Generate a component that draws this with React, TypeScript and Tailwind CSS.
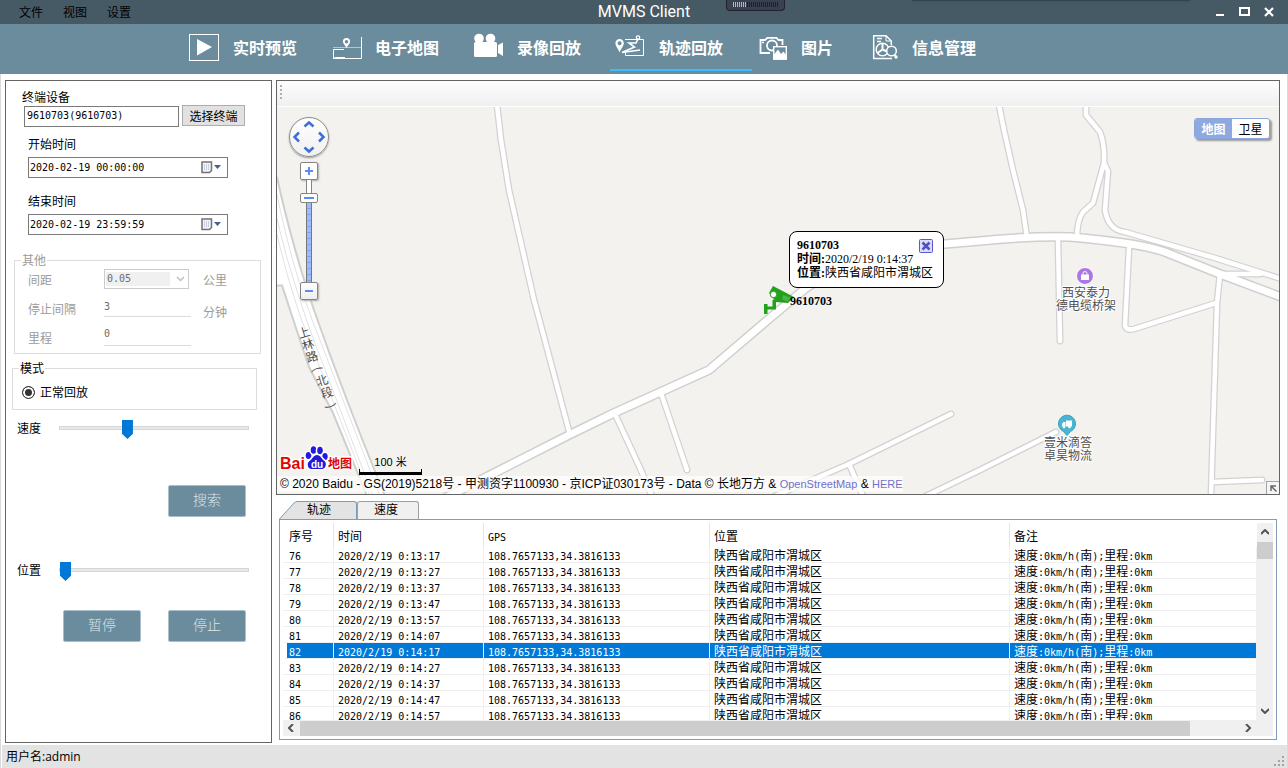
import type { ReactNode } from "react"

const navItems = [
    { label: "实时预览", icon: <PreviewIcon />, width: "w-[142px]" },
    { label: "电子地图", icon: <EMapIcon />, width: "w-[142px]" },
    { label: "录像回放", icon: <VideoIcon />, width: "w-[142px]" },
    { label: "轨迹回放", icon: <TrackIcon />, width: "w-[142px]", active: true },
    { label: "图片", icon: <PictureIcon />, width: "w-[111px]" },
    { label: "信息管理", icon: <InfoIcon />, width: "w-[142px]" },
]

const rows = [
    { id: 76, time: "0:13:17" },
    { id: 77, time: "0:13:27" },
    { id: 78, time: "0:13:37" },
    { id: 79, time: "0:13:47" },
    { id: 80, time: "0:13:57" },
    { id: 81, time: "0:14:07" },
    { id: 82, time: "0:14:17", selected: true },
    { id: 83, time: "0:14:27" },
    { id: 84, time: "0:14:37" },
    { id: 85, time: "0:14:47" },
    { id: 86, time: "0:14:57" },
]

// Minor roads, drawn as a grey casing with a white core
const smallRoads = [
    "M497 105 L501 140 L509 190 L534 300 L540 322 L569 431",
    "M999 105 L1004 130 L1013 170 L1023 210 L1027 238",
    "M1086 105 V115 L1100 132 Q1105 145 1104 163 L1093 203 L1083 212 Q1077 220 1077 238",
    "M1104 163 L1108 171 L1105 210 Q1108 230 1125 232 L1215 258 L1256 271 L1282 279",
    "M1058 240 L1060 341",
    "M1129 248 L1125 326 Q1127 331 1134 329 L1216 303",
    "M1220 274 L1217 303 L1211 496",
    "M1212 482 L1262 480",
    "M1222 274 L1260 274",
    "M1056 432 L980 470 L926 496",
    "M951 414 L849 464 L775 496",
    "M849 464 L863 496",
    "M615 414 L640 468 L652 496",
    "M661 393 L687 470",
]

const mainRoad = "M445 498 L569 435 L614 413 L709 370 L770 318 L806 288 Q860 252 945 244 L980 241 Q1030 236 1070 237 Q1140 243 1165 252 L1220 274 L1284 298"

const roadName = [
    { ch: "上", x: 304, y: 333, turn: -17 },
    { ch: "林", x: 308, y: 345, turn: -17 },
    { ch: "路", x: 312, y: 357, turn: -17 },
    { ch: "(", x: 317, y: 369, turn: 70 },
    { ch: "北", x: 322, y: 381, turn: -17 },
    { ch: "段", x: 327, y: 393, turn: -17 },
    { ch: ")", x: 331, y: 406, turn: 70 },
]

function PreviewIcon() {
    return (
        <svg width="30" height="30" viewBox="189 32 30 30" fill="none">
            <rect x="189.5" y="34.5" width="29" height="26" stroke="#fff" />
            <path d="M197 39 L212 47 L197 55.500 Z" fill="#fff" />
        </svg>
    )
}

function EMapIcon() {
    return (
        <svg width="30" height="30" viewBox="331 32 30 30" fill="none" stroke="#fff" overflow="visible">
            <path d="M361.5 37 V58.5 H333 M345 57.5 H334.500 M333.5 58 V49.500 H344" />
            <path d="M333 47.500 H361" opacity=".5" />
            <path fill="#fff" stroke="none" fillRule="evenodd" d="M346.500 38 a3.600 3.600 0 0 1 3.600 3.600 c0 2-2.200 3.800-3.600 6.400 c-1.400-2.600-3.600-4.400-3.600-6.400 a3.600 3.600 0 0 1 3.600-3.600 z M346.500 40 a1.700 1.700 0 1 0 .01 0 z" />
        </svg>
    )
}

function VideoIcon() {
    return (
        <svg width="30" height="30" viewBox="473 32 30 30" fill="#fff">
            <circle cx="479" cy="38.500" r="4.800" />
            <circle cx="490.500" cy="38.500" r="4.800" />
            <rect x="474" y="42" width="23" height="15" rx="1.500" />
            <path d="M498 45 L503 42.500 V56 L498 53 Z" />
        </svg>
    )
}

function TrackIcon() {
    return (
        <svg width="30" height="30" viewBox="615 32 30 30" fill="none" stroke="#fff">
            <path d="M625 39.500 H643.500 V55.500 H625.500 V52" />
            <circle cx="638" cy="37.500" r="1.700" strokeWidth="1.300" />
            <path d="M638 39 L636 43 H629 L634.500 47 L622 52.500 L640 50" strokeWidth="1.600" />
            <path fill="#fff" stroke="none" fillRule="evenodd" d="M619.600 39 a4.200 4.200 0 0 1 4.200 4.200 c0 2.800-2.700 5.300-4.200 9.300 c-1.500-4-4.200-6.500-4.200-9.300 a4.200 4.200 0 0 1 4.200-4.200 z M619.600 41.200 a2 2 0 1 0 .01 0 z" />
        </svg>
    )
}

function PictureIcon() {
    return (
        <svg width="30" height="30" viewBox="757 32 30 30" fill="none" stroke="#fff" strokeWidth="1.800">
            <path d="M770 53 H760.500 V40 H765 L767.500 37.800 H776.500 L778.500 40 H782.500 V45" />
            <circle cx="772" cy="45.500" r="5" />
            <path d="M762 42.500 H764" strokeWidth="1.300" />
            <rect x="773.700" y="46.700" width="12.600" height="12.500" fill="#6b8c9c" strokeWidth="1.400" />
            <path d="M774 59 V54.500 L778 49.500 L781 54 L783.500 51.500 L786 55 V59 Z" fill="#fff" stroke="none" />
            <path d="M775 57.800 H785" stroke="#fff" />
        </svg>
    )
}

function InfoIcon() {
    return (
        <svg width="30" height="30" viewBox="868 32 30 30" fill="none" stroke="#fff" strokeWidth="1.500">
            <path d="M892 58.500 H873.700 V35.700 H886 L891.300 41 V45" />
            <path d="M886 36 V41 H891" strokeWidth="1" />
            <path d="M877 38.500 H882 M877 41.500 H881" />
            <circle cx="882.500" cy="49.500" r="6.300" />
            <path d="M882.500 49.500 V43.500 M882.500 49.500 L877.500 53 M882.500 49.500 L888 52" strokeWidth="2" />
            <circle cx="891.500" cy="51" r="4.800" fill="#6b8c9c" />
            <circle cx="896" cy="57" r="1.700" fill="#fff" stroke="none" />
            <path d="M894.500 55 L896 56.500" />
        </svg>
    )
}

function TitleBar() {
    return (
        <header className="relative flex h-6 items-center bg-[#465a65] px-[14px]">
            <div className="flex flex-1 text-xs text-black">
                <button className="px-[5px]">文件</button>
                <button className="ml-[10px] px-[5px]">视图</button>
                <button className="ml-[10px] px-[5px]">设置</button>
            </div>
            <h1 className="font-[Roboto,sans-serif] text-base leading-6 text-white">MVMS Client</h1>
            <div className="flex flex-1 items-center justify-end gap-[14px]">
                <button aria-label="最小化">
                    <svg width="9" height="10"><rect y="7" width="8" height="2" fill="#fff" /></svg>
                </button>
                <button aria-label="最大化">
                    <svg width="11" height="10"><rect x="1" y="1" width="9" height="7" fill="none" stroke="#fff" strokeWidth="2" /></svg>
                </button>
                <button aria-label="关闭">
                    <svg width="10" height="10"><path d="M1 1 L9 9 M9 1 L1 9" stroke="#fff" strokeWidth="2.200" /></svg>
                </button>
            </div>
            {/* Docked meter hanging from the top edge */}
            <div className="absolute left-[726px] top-0 flex h-[11px] w-[59px] items-start rounded-b border border-t-0 border-[#20232c] bg-[#394150] pl-[6px] pt-[2px]">
                <svg width="46" height="5">
                    <path d="M0 2.500 H13" stroke="#7fd6ae" strokeWidth="5" strokeDasharray="1 1" />
                    <path d="M14 2.500 H46" stroke="#1d212b" strokeWidth="5" strokeDasharray="1 1" />
                </svg>
            </div>
            <div className="absolute right-[98px] top-0 h-px w-[278px] bg-[#35444c] shadow-[0_0_3px_#35444c]" />
        </header>
    )
}

function NavBar() {
    return (
        <nav className="flex h-[50px] bg-[#6b8c9c] pl-[184px]">
            {navItems.map((item) => (
                <button
                    key={item.label}
                    className={`${item.width} flex h-[47px] shrink-0 items-center gap-[14px] border-b-2 pl-[5px] pt-px text-base font-bold text-white ${item.active ? "border-[#3cbcfb]" : "border-transparent"}`}
                >
                    {item.icon}
                    <span>{item.label}</span>
                </button>
            ))}
        </nav>
    )
}

function DateField({ id, label, value, className }: { id: string; label: string; value: string; className: string }) {
    return (
        <div className={`ml-[22px] ${className}`}>
            <label htmlFor={id} className="block leading-4">{label}</label>
            <div className="mt-[5px] flex h-[21px] w-[200px] items-center border border-[#7a7a7a] pr-[5px]">
                <input id={id} defaultValue={value} className="min-w-0 flex-1 px-px font-['DejaVu_Sans_Mono',monospace] text-[10px] outline-none" />
                <button aria-label="打开日历">
                    <svg width="21" height="13" fill="none">
                        <path d="M1 1 H10.500 V9.500 L8.500 11.500 H1 Z" fill="#f1f3fa" stroke="#77706f" strokeWidth="1.500" />
                        <path d="M3 4 H9 M3 6 H9 M3 8 H9" stroke="#9fb0d2" strokeDasharray="1 1" />
                        <path d="M13 4 H20 L16.500 8 Z" fill="#44608c" />
                    </svg>
                </button>
            </div>
        </div>
    )
}

function SliderRow({ id, label, value, className }: { id: string; label: string; value: number; className: string }) {
    return (
        <div className={`flex h-[19px] items-start pl-[11px] ${className}`}>
            <label htmlFor={id} className="w-[42px] leading-4">{label}</label>
            <input
                id={id}
                type="range"
                defaultValue={value}
                className="h-4 w-[190px] appearance-none bg-transparent [&::-webkit-slider-runnable-track]:h-1 [&::-webkit-slider-runnable-track]:border [&::-webkit-slider-runnable-track]:border-[#d6d6d6] [&::-webkit-slider-runnable-track]:bg-[#e7eaea] [&::-webkit-slider-thumb]:-mt-[7px] [&::-webkit-slider-thumb]:h-[19px] [&::-webkit-slider-thumb]:w-[11px] [&::-webkit-slider-thumb]:appearance-none [&::-webkit-slider-thumb]:bg-[#0078d7] [&::-webkit-slider-thumb]:[clip-path:polygon(0_0,100%_0,100%_72%,50%_100%,0_72%)]"
            />
        </div>
    )
}

function ActionButton({ children }: { children: ReactNode }) {
    return (
        <button className="h-8 w-[78px] rounded-xs border border-[#a9c0cb] bg-[#6b8c9c] pb-1 text-sm font-light text-[#dbe5ea]">
            {children}
        </button>
    )
}

function Sidebar() {
    return (
        <aside className="flex w-[267px] shrink-0 flex-col border border-[#646464] pt-2">
            <label htmlFor="device" className="ml-4 leading-4">终端设备</label>
            <div className="ml-[18px] flex gap-[3px]">
                <input id="device" defaultValue="9610703(9610703)" className="mt-px h-[21px] w-[155px] border border-[#7a7a7a] px-[2px] pb-[3px] font-['DejaVu_Sans_Mono',monospace] text-[10px] outline-none" />
                <button className="h-[21px] w-[63px] border border-[#adadad] bg-[#e1e1e1] leading-4">选择终端</button>
            </div>
            <DateField id="start" label="开始时间" value="2020-02-19 00:00:00" className="mt-[9px]" />
            <DateField id="end" label="结束时间" value="2020-02-19 23:59:59" className="mt-[15px]" />

            <fieldset disabled className="ml-2 mt-[17px] h-[102px] w-[247px] border border-[#dcdcdc] pl-[13px] text-[#9b9b9b]">
                <legend className="-ml-[7px] px-px leading-4">其他</legend>
                <div className="grid grid-cols-[76px_99px_auto] pt-px">
                    <label htmlFor="distance" className="pt-[3px] leading-4">间距</label>
                    <div className="flex h-5 w-[85px] items-center border border-[#cccccc] bg-white">
                        <select id="distance" className="ml-px h-[14px] w-[64px] appearance-none bg-[#f0f0f0] pl-px font-['DejaVu_Sans_Mono',monospace] text-[10px] leading-3 text-[#6d6d6d]">
                            <option>0.05</option>
                        </select>
                        <svg width="9" height="6" className="ml-[6px]"><path d="M1 1 L4.500 4.500 L8 1" fill="none" stroke="#bfbfbf" strokeWidth="1.500" /></svg>
                    </div>
                    <span className="pt-[3px] leading-4">公里</span>
                    <label htmlFor="stop" className="pt-[12px] leading-4">停止间隔</label>
                    <input id="stop" defaultValue="3" className="mt-[7px] h-[21px] w-[87px] border-b border-[#dcdcdc] font-['DejaVu_Sans_Mono',monospace] text-[10px] text-[#6d6d6d]" />
                    <span className="pt-[15px] leading-4">分钟</span>
                    <label htmlFor="mileage" className="pt-[10px] leading-4">里程</label>
                    <input id="mileage" defaultValue="0" className="mt-[3px] h-[23px] w-[87px] border-b border-[#dcdcdc] pb-[2px] font-['DejaVu_Sans_Mono',monospace] text-[10px] text-[#6d6d6d]" />
                </div>
            </fieldset>

            <fieldset className="ml-[6px] mt-[6px] h-[50px] w-[245px] border border-[#dcdcdc] pl-[9px]">
                <legend className="-ml-[3px] px-px leading-4">模式</legend>
                <label className="mt-[8px] flex items-center gap-[5px] leading-4">
                    <input type="radio" name="mode" defaultChecked className="h-[13px] w-[13px] appearance-none rounded-full border border-[#333] bg-[#333] shadow-[inset_0_0_0_2px_#fff]" />
                    正常回放
                </label>
            </fieldset>

            <SliderRow id="speed" label="速度" value={35} className="mt-[10px]" />
            <div className="mt-[46px] flex pl-[162px]">
                <ActionButton>搜索</ActionButton>
            </div>
            <SliderRow id="position" label="位置" value={0} className="mt-[45px]" />
            <div className="mt-[29px] flex gap-[27px] pl-[57px]">
                <ActionButton>暂停</ActionButton>
                <ActionButton>停止</ActionButton>
            </div>
        </aside>
    )
}

function MapCanvas() {
    return (
        <svg className="absolute left-0 top-0 h-[387px] w-[1002px]" viewBox="277 107 1002 387" fill="none">
            {/* Dual carriageway on the left */}
            <path d="M277 177 C285 215 300 270 314 310 C335 370 360 435 385 496 L367 496 L333 413 L309 367 L289 310 L283 286 L277 285 Z" fill="#fff" />
            <path d="M277 177 C285 215 300 270 314 310 C335 370 360 435 385 496" stroke="#cfcfcf" strokeWidth="2" />
            <path d="M277 285.500 H282 L292 316 L309 367 L333 413 L367 496" stroke="#cfcfcf" strokeWidth="2" />
            <path d="M277 194 C286 240 300 290 318 335 L380 496 M277 218 C286 260 300 300 310 330 L373 496 M277 234 C284 265 294 300 306 332 L370 496" stroke="#e2e2e2" />
            {smallRoads.map((d) => <path key={d} d={d} stroke="#d2d2d2" strokeWidth="7" strokeLinejoin="round" strokeLinecap="round" />)}
            <path d={mainRoad} stroke="#cfcfcf" strokeWidth="10" strokeLinejoin="round" />
            {smallRoads.map((d) => <path key={d} d={d} stroke="#fff" strokeWidth="4.500" strokeLinejoin="round" strokeLinecap="round" />)}
            <path d={mainRoad} stroke="#fff" strokeWidth="7" strokeLinejoin="round" />

            <g fill="#4f4f4f" fontSize="12" textAnchor="middle">
                {roadName.map((c) => (
                    <text key={c.ch} x={c.x} y={c.y + 4} transform={`rotate(${c.turn} ${c.x} ${c.y})`}>{c.ch}</text>
                ))}
            </g>
            <g fill="#4f4f4f" stroke="#fff" strokeWidth="2" paintOrder="stroke" fontSize="12" textAnchor="middle">
                <text x="1086" y="297">西安泰力</text>
                <text x="1086" y="310">德电缆桥架</text>
                <text x="1068" y="447">壹米滴答</text>
                <text x="1068" y="460">卓昊物流</text>
            </g>

            {/* Shop pin */}
            <circle cx="1085" cy="276" r="8.500" fill="#ab77e2" stroke="#fff" />
            <path d="M1081 274.500 H1089 V280 H1081 Z" fill="#fff" />
            <path d="M1083 275 V273.500 a2 2 0 0 1 4 0 V275" stroke="#fff" />
            {/* Logistics pin */}
            <path d="M1067 435.500 L1063.500 431.500 a8.500 8.500 0 1 1 7 0 Z" fill="#4ab5d3" stroke="#3ba0be" />
            <path d="M1066 420.500 H1072 V426.500 H1066 Z M1062 426.500 V424 L1063.500 422 H1065.500 V426.500 Z" fill="#fff" />
            <circle cx="1064" cy="427" r="1.300" fill="#fff" />
            <circle cx="1069.500" cy="427" r="1.300" fill="#fff" />

            {/* Camera marker */}
            <g fill="#22a11b">
                <path d="M773 286 L794 297 L788 303 L776 302 L769 293 Z" />
                <path d="M764 304 H767.500 V306.500 H772.500 V300 L776 299 V309.500 H767.500 V314 H764 Z" />
                <path d="M783 295 L791 298 L787 301.500 L782 299 Z" fill="#4cb546" />
            </g>
            <circle cx="773.500" cy="294.500" r="3.200" fill="#fff" stroke="#22a11b" />

            {/* Logo */}
            <g stroke="#fff" strokeWidth="3" paintOrder="stroke" strokeLinejoin="round">
                <text x="280" y="469" fill="#e10602" fontSize="16" fontWeight="bold" fontFamily="Liberation Sans, sans-serif">Bai</text>
                <text x="328" y="468" fill="#e10602" fontSize="12" fontWeight="bold">地图</text>
                <g fill="#2319dc">
                    <ellipse cx="308.500" cy="455.500" rx="2.800" ry="3.600" />
                    <ellipse cx="313.500" cy="450" rx="2.800" ry="3.800" />
                    <ellipse cx="320" cy="450.500" rx="2.800" ry="3.800" />
                    <ellipse cx="325" cy="456.500" rx="2.700" ry="3.500" />
                    <path d="M317 455 c3.500 0 4.500 4 7.500 6 c2.500 2 1.500 8-2.500 8 h-10.500 c-4 0-5-6-2-8 c3-2 4-6 7.500-6 z" />
                </g>
            </g>
            <text x="311" y="467.500" fill="#fff" fontSize="10" fontWeight="bold" fontFamily="Liberation Sans, sans-serif">du</text>
        </svg>
    )
}

function ZoomControl() {
    return (
        <div className="absolute left-[12px] top-[10px] flex w-10 flex-col items-center">
            <button aria-label="平移" className="h-10 w-10 rounded-full border border-[#8c8c8c] bg-linear-to-b from-white to-[#f0f0f0] shadow-[0_1px_2px_#999]">
                <svg width="38" height="38" fill="none" stroke="#3d6fd4" strokeWidth="2.500">
                    <path d="M14.500 8.500 L19 4.500 L23.500 8.500 M14.500 29.500 L19 33.500 L23.500 29.500 M9 14.500 L4.500 19 L9 23.500 M29 14.500 L33.500 19 L29 23.500" />
                </svg>
            </button>
            <button aria-label="放大" className="mt-[5px] flex h-[18px] w-[18px] items-center justify-center rounded-xs border border-[#858585] bg-white shadow-[1px_1px_2px_#aaa]">
                <svg width="8" height="8" stroke="#5d8cf0" strokeWidth="2"><path d="M0 4 H8 M4 0 V8" /></svg>
            </button>
            <div className="h-[13px] w-[6px] border-x border-[#858585] bg-white" />
            <button aria-label="缩放级别" className="flex h-[10px] w-[18px] items-center justify-center rounded-xs border border-[#858585] bg-white">
                <svg width="10" height="2"><rect width="10" height="2" fill="#5d8cf0" /></svg>
            </button>
            <div className="h-[79px] w-[6px] border-x border-[#777] bg-[repeating-linear-gradient(#9dbcff_0_5px,#84a3e6_5px_6px)]" />
            <button aria-label="缩小" className="flex h-[18px] w-[18px] items-center justify-center rounded-xs border border-[#858585] bg-linear-to-b from-white to-[#eee] shadow-[1px_1px_2px_#aaa]">
                <svg width="8" height="2"><rect width="8" height="2" fill="#5d8cf0" /></svg>
            </button>
        </div>
    )
}

function MapPanel() {
    return (
        <section className="flex min-h-[415px] flex-1 flex-col border border-[#646464]">
            <div className="flex h-[26px] items-start border-b border-white bg-linear-to-b from-[#fdfdfd] to-[#f0f0f0] pl-[3px] pt-[4px]">
                <svg width="3" height="16"><path d="M1 0 V15" stroke="#b0b0b0" strokeWidth="2" strokeDasharray="2 2" /></svg>
            </div>
            <div className="relative flex-1 overflow-hidden bg-[#f3f2ee]">
                <MapCanvas />
                <ZoomControl />
                <div className="absolute right-[9px] top-[11px] flex h-[21px] w-[76px] overflow-hidden rounded-[3px] border border-[#8ba4dc] bg-white shadow-[2px_2px_2px_#999]">
                    <button className="flex-1 bg-[#8ea8e0] font-bold text-white">地图</button>
                    <button className="flex-1">卫星</button>
                </div>

                {/* Track point popup */}
                <div className="absolute left-[512px] top-[124px] w-[155px] whitespace-nowrap rounded-lg border border-black bg-white pb-[7px] pl-[7px] pt-[6px] font-['Liberation_Serif','Noto_Sans_CJK_SC',serif] text-xs leading-[14px]">
                    <p className="font-bold">9610703</p>
                    <p><b>时间:</b>2020/2/19 0:14:37</p>
                    <p><b>位置:</b>陕西省咸阳市渭城区</p>
                    <button aria-label="关闭" className="absolute right-[10px] top-[7px]">
                        <svg width="14" height="14" fill="none">
                            <rect x=".5" y=".5" width="13" height="13" rx="1" fill="#d9dcfb" stroke="#5a5ad0" />
                            <path d="M3.500 3.500 L10.500 10.500 M10.500 3.500 L3.500 10.500" stroke="#4f4fc4" strokeWidth="2.500" />
                        </svg>
                    </button>
                </div>
                <p className="absolute left-[513px] top-[186px] font-['Liberation_Serif',serif] text-xs font-bold">9610703</p>

                <div className="absolute bottom-[19px] left-[82px] h-[22px] w-[63px] text-center text-[11px] leading-[18px]">
                    <p className="font-['Liberation_Sans','Noto_Sans_CJK_SC',sans-serif]">100 米</p>
                    <div className="-mt-[2px] h-[6px] border-x border-b-3 border-black" />
                </div>
                <p className="absolute bottom-[2px] left-0 whitespace-nowrap bg-white/70 pl-[3px] font-['Liberation_Sans','Noto_Sans_CJK_SC',sans-serif] text-xs leading-4">
                    © 2020 Baidu - GS(2019)5218号 - 甲测资字1100930 - 京ICP证030173号 - Data © 长地万方 &amp;{" "}
                    <a href="#osm" className="text-[11px] text-[#7070cc]">OpenStreetMap</a> &amp;{" "}
                    <a href="#here" className="text-[11px] text-[#7070cc]">HERE</a>
                </p>
                <button aria-label="展开鹰眼" className="absolute bottom-0 right-0 flex h-[13px] w-[13px] items-center justify-center border-l border-t border-[#a5a5a5] bg-[#f5f5f5]">
                    <svg width="7" height="7" fill="none" stroke="#6a6a6a" strokeWidth="1.500"><path d="M1 6 V1 H6 M1 1 L6.500 6.500" /></svg>
                </button>
            </div>
        </section>
    )
}

function Mono({ children }: { children: ReactNode }) {
    return <span className="font-['DejaVu_Sans_Mono',monospace] text-[10px] leading-none">{children}</span>
}

function TrackTable() {
    return (
        <section className="ml-[3px] mr-[3px] mt-[6px]">
            <div role="tablist" className="flex">
                <button role="tab" aria-selected="true" className="flex h-[18px] w-[78px] items-start leading-4">
                    <svg width="18" height="18" className="shrink-0">
                        <path d="M0 18 L15 2 Q16.500 .5 18 .5 V18 Z" fill="#e3e3e3" />
                        <path d="M.5 18 L15 2 Q16.500 .5 18 .5" fill="none" stroke="#7f9db9" />
                    </svg>
                    <span className="h-[18px] flex-1 rounded-tr-[3px] border-r border-t border-[#7f9db9] bg-[#e3e3e3] pl-[10px] text-left leading-[13px]">轨迹</span>
                </button>
                <button role="tab" aria-selected="false" className="flex h-[18px] w-[62px] justify-center rounded-t-[3px] border border-b-0 border-[#a0a0a0] bg-[#f0f0f0] pr-[4px] leading-[13px]">速度</button>
            </div>
            <div className="border border-[#7f9db9] p-[3px]">
                <div className="flex h-[197px]">
                    <div className="min-w-0 flex-1 overflow-hidden">
                        <table className="w-full table-fixed border-separate border-spacing-0 whitespace-nowrap text-left leading-[15px]">
                            <colgroup>
                                <col className="w-[51px]" />
                                <col className="w-[150px]" />
                                <col className="w-[226px]" />
                                <col className="w-[300px]" />
                                <col />
                            </colgroup>
                            <thead>
                                <tr className="h-6 *:border-r *:border-[#e5e5e5] *:p-0 *:pl-1 *:font-normal">
                                    <th><span className="pl-[2px]">序号</span></th>
                                    <th>时间</th>
                                    <th><Mono>GPS</Mono></th>
                                    <th>位置</th>
                                    <th className="border-r-0!">备注</th>
                                </tr>
                            </thead>
                            <tbody>
                                {rows.map((row) => (
                                    <tr key={row.id} className={`h-4 *:h-4 *:border-b *:border-r *:border-[#f0f0f0] *:p-0 *:pl-1 ${row.selected ? "bg-[#0078d7] text-white" : ""}`}>
                                        <td className={row.selected ? "border-l-4 border-l-white! pl-[2px]!" : "pl-[6px]!"}><Mono>{row.id}</Mono></td>
                                        <td><Mono>2020/2/19 {row.time}</Mono></td>
                                        <td><Mono>108.7657133,34.3816133</Mono></td>
                                        <td>陕西省咸阳市渭城区</td>
                                        <td>速度<Mono>:0km/h(</Mono>南<Mono>);</Mono>里程<Mono>:0km</Mono></td>
                                    </tr>
                                ))}
                            </tbody>
                        </table>
                    </div>
                    <div className="flex w-4 flex-col items-center bg-[#f0f0f0] pb-[6px] pt-[6px]">
                        <svg width="8" height="6"><path d="M0 5 L4 1 L8 5" fill="none" stroke="#555" strokeWidth="2" /></svg>
                        <div className="mt-[7px] h-[17px] w-full bg-[#cdcdcd]" />
                        <svg width="8" height="6" className="mt-auto"><path d="M0 1 L4 5 L8 1" fill="none" stroke="#555" strokeWidth="2" /></svg>
                    </div>
                </div>
                <div className="flex h-4 items-center bg-[#f0f0f0] pl-[5px] pr-[22px]">
                    <svg width="6" height="8"><path d="M5 0 L1 4 L5 8" fill="none" stroke="#555" strokeWidth="2" /></svg>
                    <div className="ml-[6px] mr-[55px] h-[15px] flex-1 bg-[#cdcdcd]" />
                    <svg width="6" height="8"><path d="M1 0 L5 4 L1 8" fill="none" stroke="#555" strokeWidth="2" /></svg>
                </div>
            </div>
        </section>
    )
}

export default function App() {
    return (
        <div className="flex min-h-screen flex-col bg-white font-['Noto_Sans_CJK_SC',sans-serif] text-xs text-black">
            <TitleBar />
            <NavBar />
            <div className="flex flex-1 flex-col border-x border-[#dadada]">
                <main className="flex flex-1 gap-[4px] pb-[2px] pl-1 pr-[7px] pt-[6px]">
                    <Sidebar />
                    <div className="flex min-w-0 flex-1 flex-col pb-[3px]">
                        <MapPanel />
                        <TrackTable />
                    </div>
                </main>
                <footer className="ml-px flex h-[23px] items-center justify-between bg-[#e3e3e3] pl-1">
                    <span className="font-['Open_Sans','Noto_Sans_CJK_SC',sans-serif]">用户名:admin</span>
                    <svg width="14" height="14" fill="#a5a5a5" className="self-end">
                        <path d="M9 2 h2 v2 h-2 z M9 6 h2 v2 h-2 z M9 10 h2 v2 h-2 z M5 6 h2 v2 h-2 z M5 10 h2 v2 h-2 z M1 10 h2 v2 h-2 z" />
                    </svg>
                </footer>
            </div>
        </div>
    )
}
